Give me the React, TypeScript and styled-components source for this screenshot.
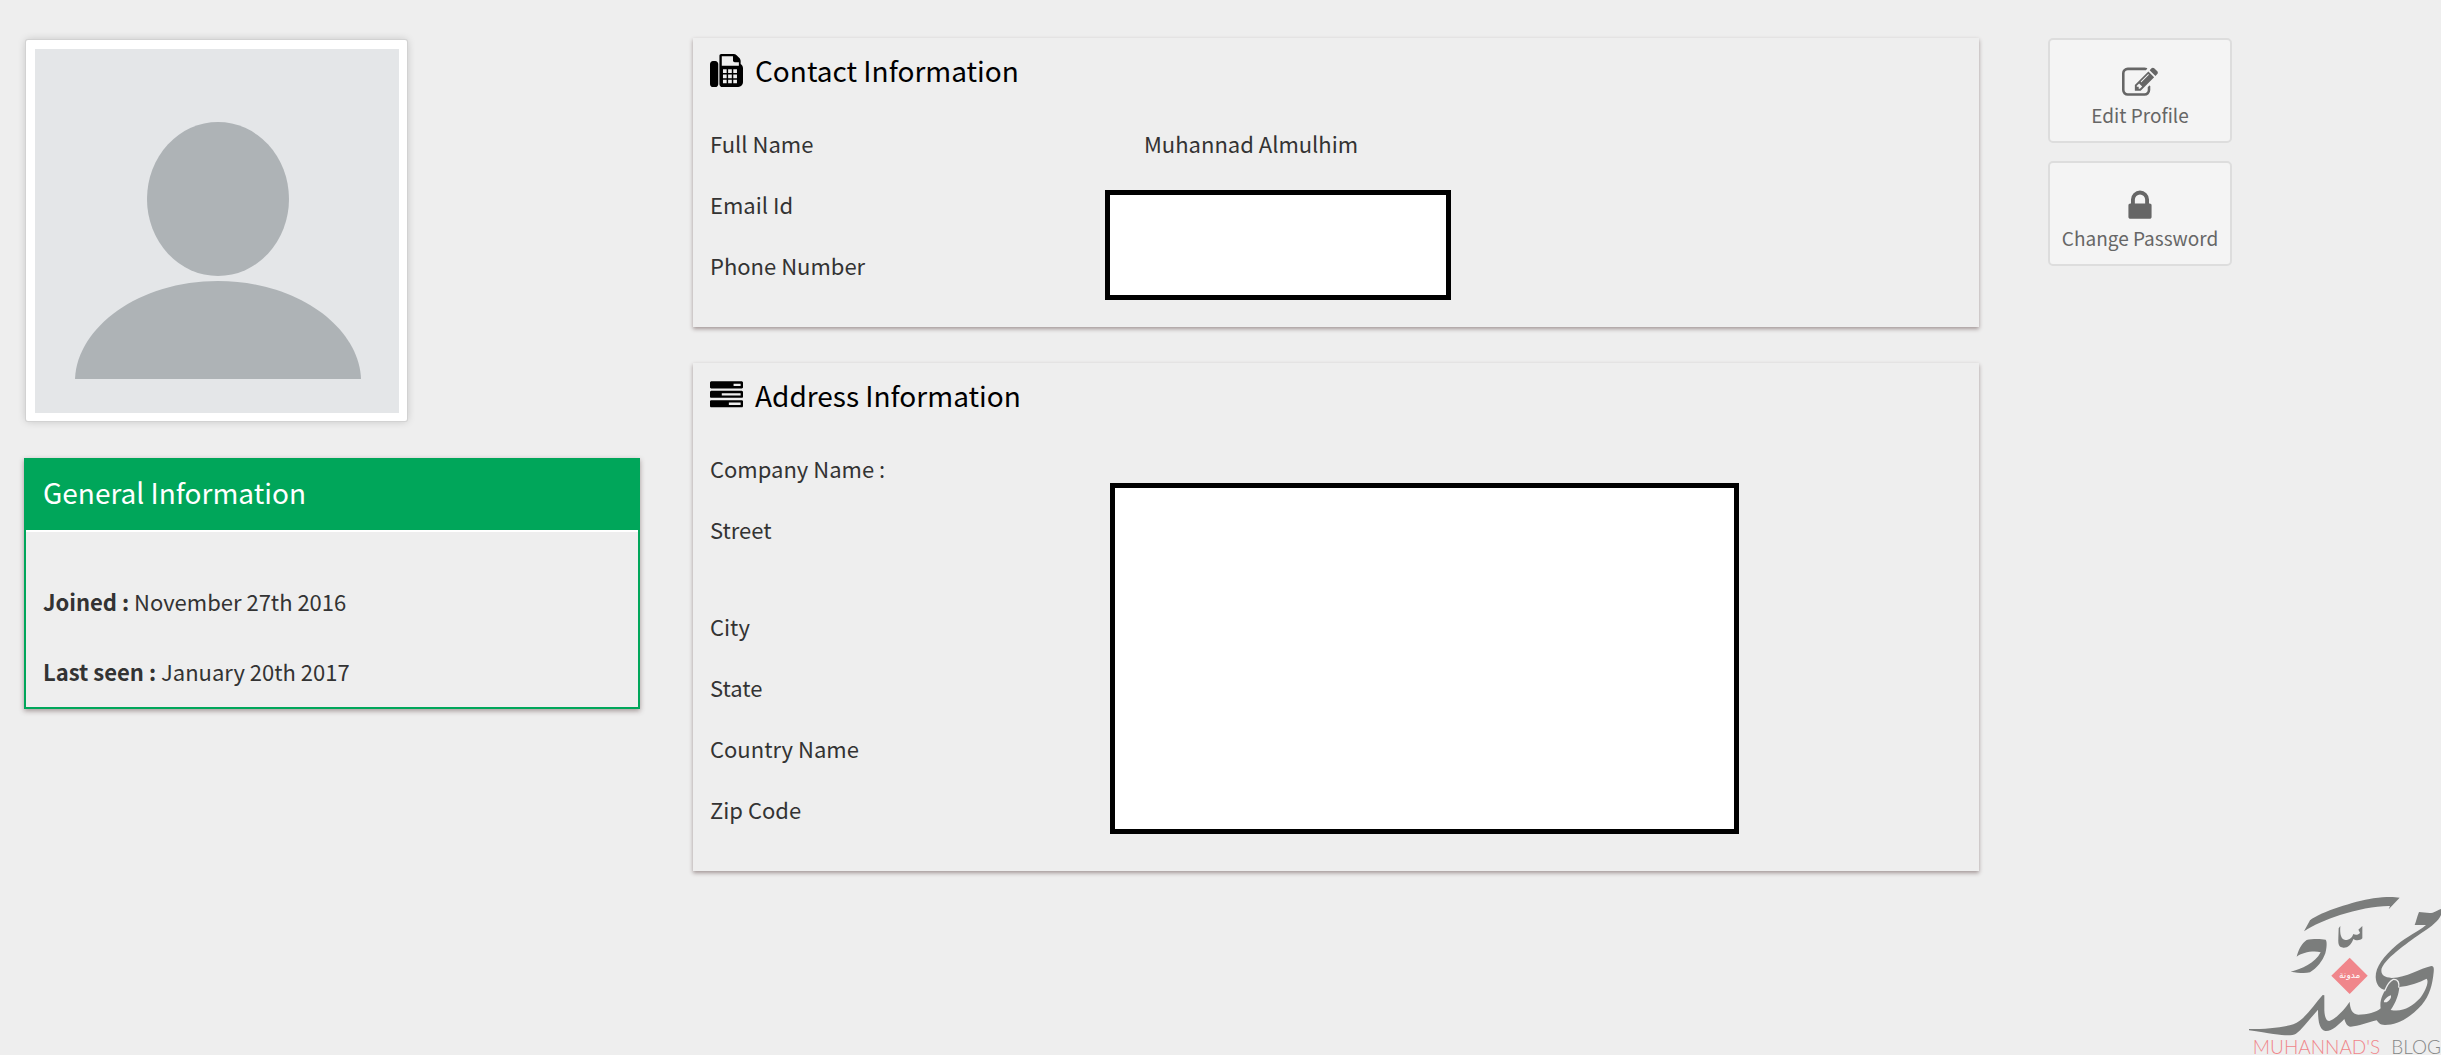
import React from "react";
import styled, { createGlobalStyle } from "styled-components";

const GlobalStyle = createGlobalStyle`
  *, *::before, *::after { box-sizing: border-box; }
  body {
    margin: 0;
    background: #eeeeee;
    color: #333333;
    font-family: "Noto Sans CJK SC", "Noto Sans", sans-serif;
    font-size: 22px;
    line-height: 31px;
  }
`;

const Page = styled.main`
  position: relative;
  min-height: 100vh;
  display: grid;
  grid-template-columns: 616fr 1286fr 409fr;
  column-gap: 53px;
  align-items: start;
  padding: 38px 0 0 24px;
  overflow: hidden;
`;

const Column = styled.div<{ $gap: number }>`
  display: flex;
  flex-direction: column;
  gap: ${(p) => p.$gap}px;
`;

const Avatar = styled.svg`
  display: block;
  width: 381px;
  height: 381px;
  margin: 2px;
  padding: 9px 8px 8px 9px;
  background: #ffffff;
  border-radius: 2px;
  box-shadow: 0 0 0 1px #d2d2d2, 0 0 8px rgba(0, 0, 0, 0.2);
`;

const GeneralCard = styled.section`
  border: 2px solid #00a65a;
  box-shadow: 0 2px 5px rgba(70, 45, 45, 0.45);
`;

const GeneralTitle = styled.h2`
  margin: 0;
  padding: 13px 17px 19px;
  background: #00a65a;
  border-bottom: 2px solid #ffffff;
  color: #ffffff;
  font-size: 28px;
  line-height: 38px;
  font-weight: 400;
`;

const GeneralBody = styled.div`
  display: flex;
  flex-direction: column;
  gap: 39px;
  padding: 54px 17px 20px;
`;

const Line = styled.p`
  margin: 0;
`;

const Card = styled.section`
  position: relative;
  padding: 13px 17px 31px;
  box-shadow: 0 2px 4px rgba(70, 45, 45, 0.45);
`;

const CardTitle = styled.h2`
  display: flex;
  align-items: center;
  gap: 12px;
  margin: 0 0 24px;
  color: #000000;
  font-size: 28px;
  line-height: 38px;
  font-weight: 400;
`;

const Fields = styled.dl`
  display: grid;
  margin: 0;
`;

const Field = styled.div<{ $tall?: boolean }>`
  display: grid;
  grid-template-columns: 434fr 818fr;
  padding: 15px 0;
  min-height: ${(p) => (p.$tall ? 97 : 61)}px;
`;

const Term = styled.dt``;

const Value = styled.dd`
  margin: 0;
`;

const Redaction = styled.div<{ $left: number; $top: number; $width: number; $height: number }>`
  position: absolute;
  left: ${(p) => p.$left}px;
  top: ${(p) => p.$top}px;
  width: ${(p) => p.$width}px;
  height: ${(p) => p.$height}px;
  background: #ffffff;
  border: 5px solid #000000;
`;

const Actions = styled.nav`
  display: flex;
  flex-direction: column;
  align-items: flex-start;
  gap: 18px;
  padding-left: 16px;
`;

const ActionButton = styled.button`
  display: flex;
  flex-direction: column;
  align-items: center;
  width: 184px;
  height: 105px;
  padding: 25px 0 0;
  background: #f4f4f4;
  border: 2px solid #dddddd;
  border-radius: 5px;
  color: #666666;
  font-family: inherit;
  font-size: 19px;
  line-height: 28px;
  white-space: nowrap;
  cursor: pointer;
`;

const Icon = styled.svg<{ $size: number }>`
  flex: none;
  width: ${(p) => p.$size}px;
  height: ${(p) => p.$size}px;
  fill: currentColor;
`;

const Watermark = styled.div`
  position: absolute;
  right: 0;
  bottom: 0;
  width: 211px;
  height: 170px;
`;

const Calligraphy = styled.svg`
  display: block;
  width: 211px;
  height: 170px;
`;

const Wordmark = styled.div`
  position: absolute;
  right: 0;
  bottom: 0;
  display: flex;
  gap: 11px;
  color: #858786;
  font-family: Lato, sans-serif;
  font-size: 19px;
  line-height: 16px;
  font-weight: 300;
  white-space: nowrap;
`;

const WordmarkName = styled.span`
  color: #f0868b;
`;

const FaxIcon = () => (
  <Icon $size={33} viewBox="0 0 1792 1792" aria-hidden="true">
    <path
      fillRule="evenodd"
      d="M288 384q66 0 113 47t47 113v1088q0 66-47 113t-113 47h-128q-66 0-113-47t-47-113v-1088q0-66 47-113t113-47h128zM1664 547q58 34 93 93t35 128v768q0 106-75 181t-181 75h-864q-66 0-113-47t-47-113v-1536q0-40 28-68t68-28h672q40 0 88 20t76 48l152 152q28 28 48 76t20 88zM640 128v512h928v-192h-224q-96 0-96-96v-224zM704 832v200h200v-200zM984 832v200h200v-200zM1264 832v200h200v-200zM704 1112v200h200v-200zM984 1112v200h200v-200zM1264 1112v200h200v-200zM704 1392v200h200v-200zM984 1392v200h200v-200zM1264 1392v200h200v-200z"
    />
  </Icon>
);

const TasksIcon = () => (
  <Icon $size={33} viewBox="0 0 1792 1792" aria-hidden="true">
    <path d="M1024 1408h640v-128h-640v128zm-384-512h1024v-128h-1024v128zm640-512h384v-128h-384v128zm512 832v256q0 26-19 45t-45 19h-1664q-26 0-45-19t-19-45v-256q0-26 19-45t45-19h1664q26 0 45 19t19 45zm0-512v256q0 26-19 45t-45 19h-1664q-26 0-45-19t-19-45v-256q0-26 19-45t45-19h1664q26 0 45 19t19 45zm0-512v256q0 26-19 45t-45 19h-1664q-26 0-45-19t-19-45v-256q0-26 19-45t45-19h1664q26 0 45 19t19 45z" />
  </Icon>
);

const EditIcon = () => (
  <Icon $size={36} viewBox="0 0 1792 1792" aria-hidden="true">
    <path d="M888 1184l116-116-152-152-116 116v56h96v96h56zm440-720q-16-16-33 1l-350 350q-17 17-1 33t33-1l350-350q17-17 1-33zm80 594v190q0 119-84.5 203.5t-203.5 84.5h-832q-119 0-203.5-84.5t-84.5-203.5v-832q0-119 84.5-203.5t203.5-84.5h832q63 0 117 25 15 7 18 23 3 17-9 29l-49 49q-14 14-32 8-23-6-45-6h-832q-66 0-113 47t-47 113v832q0 66 47 113t113 47h832q66 0 113-47t47-113v-126q0-13 9-22l64-64q15-15 35-7t20 29zm-96-738l288 288-672 672h-288v-288zm444 132l-92 92-288-288 92-92q28-28 68-28t68 28l152 152q28 28 28 68t-28 68z" />
  </Icon>
);

const LockIcon = () => (
  <Icon $size={36} viewBox="0 0 1792 1792" aria-hidden="true">
    <path d="M640 768h512v-192q0-106-75-181t-181-75-181 75-75 181v192zm832 96v576q0 40-28 68t-68 28h-960q-40 0-68-28t-28-68v-576q0-40 28-68t68-28h32v-192q0-184 132-316t316-132 316 132 132 316v192h32q40 0 68 28t28 68z" />
  </Icon>
);

const BlogLogo = () => (
  <Watermark>
    <Calligraphy viewBox="0 0 633 510" aria-hidden="true">
      <g fill="#7b7d7c">
        <path d="M222 139L240 106C275 80 370 50 430 40C465 35 490 35 509 38L476 73L480 63C440 62 380 74 330 90C290 103 250 120 222 139Z" />
        <path d="M331 123C329 148 333 163 346 165C360 165 366 158 370 147C376 151 386 150 390 143L385 134L397 123V160C390 168 376 167 370 162C364 180 352 189 340 188C327 187 324 180 325 160L326 130Z" />
        <path d="M200 215C205 195 215 175 230 165C245 161 272 161 287 164C292 170 290 190 286 205C278 228 260 250 240 262C225 266 205 264 182 260C215 252 255 235 272 202C250 196 215 203 200 215Z" />
        <path
          fillRule="evenodd"
          d="M554 120C559 108 561 95 567 81C580 82 596 85 608 83C618 80 625 75 633 72V90C625 108 605 124 580 140C540 168 470 215 455 250C451 268 460 277 485 279C530 278 570 250 604 243C612 243 612 250 611 262C607 300 600 330 575 360C540 400 500 420 465 420C448 420 445 412 440 406C415 412 385 424 362 425C350 424 346 412 343 402C325 420 305 440 286 438C270 434 264 415 264 374C240 400 220 430 198 446C180 456 150 450 57 436V432C110 432 155 428 190 418C230 400 250 360 278 330L283 331V376C284 395 288 408 298 408C315 404 345 372 359 350C360 370 366 388 385 389C410 389 440 382 452 370C448 345 460 325 466 315C450 312 438 300 437 276C437 245 460 215 500 180C530 155 565 140 588 120ZM508 306C506 330 498 352 482 375C520 382 545 365 570 340C586 320 598 290 590 281C570 292 535 303 508 306ZM462 352C460 345 474 334 482 331C486 336 480 346 470 352Z"
        />
      </g>
      <path d="M464 318C472 298 480 287 490 283C506 282 508 296 506 308" fill="none" stroke="#eeeeee" strokeWidth="4" />
      <path d="M359 218L413 272L359 327L304 272Z" fill="#f0868b" />
      <text x="359" y="278" textAnchor="middle" fill="#ffffff" fontFamily="DejaVu Sans, sans-serif" fontSize="27" fontWeight="400">
        مدونة
      </text>
    </Calligraphy>
    <Wordmark>
      <WordmarkName>MUHANNAD'S</WordmarkName>
      <span>BLOG</span>
    </Wordmark>
  </Watermark>
);

export default function App() {
  return (
    <>
      <GlobalStyle />
      <Page>
        <Column $gap={35}>
          <Avatar viewBox="0 0 364 364" role="img" aria-label="Profile picture">
            <rect width="364" height="364" fill="#e4e6e8" />
            <ellipse cx="183" cy="150" rx="71" ry="77" fill="#aeb3b6" />
            <path d="M40 330C42 278 104 232 183 232S324 278 326 330Z" fill="#aeb3b6" />
          </Avatar>
          <GeneralCard>
            <GeneralTitle>General Information</GeneralTitle>
            <GeneralBody>
              <Line>
                <strong>Joined :</strong> November 27th 2016
              </Line>
              <Line>
                <strong>Last seen :</strong> January 20th 2017
              </Line>
            </GeneralBody>
          </GeneralCard>
        </Column>
        <Column $gap={36}>
          <Card>
            <CardTitle>
              <FaxIcon />
              Contact Information
            </CardTitle>
            <Fields>
              <Field>
                <Term>Full Name</Term>
                <Value>Muhannad Almulhim</Value>
              </Field>
              <Field>
                <Term>Email Id</Term>
              </Field>
              <Field>
                <Term>Phone Number</Term>
              </Field>
            </Fields>
            <Redaction $left={412} $top={152} $width={346} $height={110} />
          </Card>
          <Card>
            <CardTitle>
              <TasksIcon />
              Address Information
            </CardTitle>
            <Fields>
              <Field>
                <Term>Company Name :</Term>
              </Field>
              <Field $tall>
                <Term>Street</Term>
              </Field>
              <Field>
                <Term>City</Term>
              </Field>
              <Field>
                <Term>State</Term>
              </Field>
              <Field>
                <Term>Country Name</Term>
              </Field>
              <Field>
                <Term>Zip Code</Term>
              </Field>
            </Fields>
            <Redaction $left={417} $top={120} $width={629} $height={351} />
          </Card>
        </Column>
        <Actions>
          <ActionButton type="button">
            <EditIcon />
            Edit Profile
          </ActionButton>
          <ActionButton type="button">
            <LockIcon />
            Change Password
          </ActionButton>
        </Actions>
        <BlogLogo />
      </Page>
    </>
  );
}
